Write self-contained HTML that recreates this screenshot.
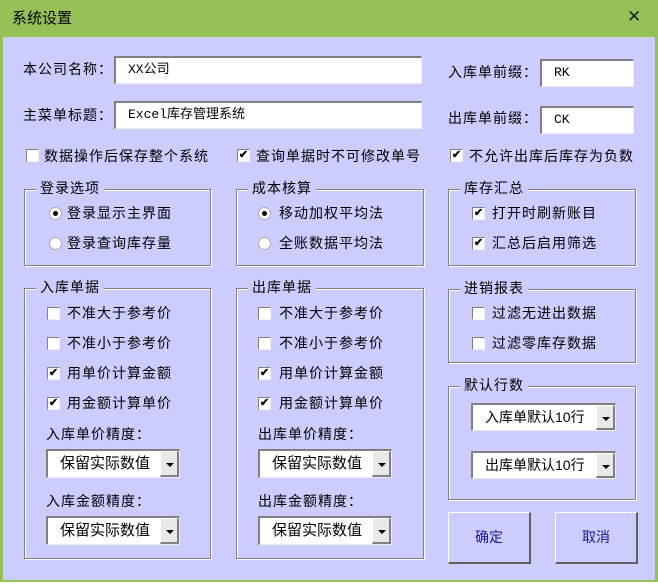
<!DOCTYPE html>
<html><head><meta charset="utf-8"><style>
*{margin:0;padding:0;box-sizing:border-box}
body{width:658px;height:585px;overflow:hidden;background:#fff;font-family:"Liberation Sans","Noto Sans CJK SC",sans-serif;font-size:14px;color:#000;position:relative}
#win{position:absolute;left:0;top:0;width:658px;height:582px;background:#95c256}
#body{position:absolute;left:3px;top:37px;width:652px;height:543px;background:#ccccff}
.a{position:absolute;white-space:nowrap;line-height:16px;letter-spacing:1px}
.tb{position:absolute;background:#fff;border-top:2px solid #808080;border-left:2px solid #808080;border-right:1px solid #eee;border-bottom:1px solid #eee;font-family:"Liberation Mono","Noto Sans CJK SC",monospace;font-size:13px;padding-left:12px;line-height:24px}
.cb{position:absolute;width:13px;height:13px;background:#fff;border-top:1px solid #808080;border-left:1px solid #808080;border-right:1px solid #f0f0f0;border-bottom:1px solid #f0f0f0;font-size:11px;line-height:11px;text-align:center;font-weight:bold}
.rb{position:absolute;width:13px;height:13px;border-radius:50%;background:#fff;border:1px solid #aaa}
.rb.on::after{content:"";position:absolute;left:3px;top:3px;width:5px;height:5px;border-radius:50%;background:#000}
.fr{position:absolute;border:1px solid #808080;box-shadow:1px 1px 0 #fff,inset 1px 1px 0 #fff}
.ft{position:absolute;background:#ccccff;padding:0 4px;line-height:16px;white-space:nowrap;letter-spacing:1px}
.cmb{position:absolute;background:#fff;border-top:2px solid #808080;border-left:2px solid #808080;border-right:1px solid #eee;border-bottom:1px solid #eee;line-height:25px;padding-left:12px;white-space:nowrap;font-size:15px}
.cmb .dd{position:absolute;right:0;top:0;width:19px;height:100%;background:#e8e8e8;border-right:2px solid #808080;border-bottom:2px solid #808080;border-top:1px solid #fff;border-left:1px solid #fff}
.cmb .dd::after{content:"";position:absolute;left:5px;top:11px;border-left:4px solid transparent;border-right:4px solid transparent;border-top:4px solid #000}
.btn{position:absolute;width:83px;height:52px;background:#ccccff;border-top:1px solid #fff;border-left:1px solid #fff;border-right:2px solid #606060;border-bottom:2px solid #606060;color:#1a1aa0;text-align:center;line-height:49px}
</style></head><body>
<div id="win"></div>
<div class="a" style="left:12px;top:11px;font-size:15px;letter-spacing:0">系统设置</div>
<div class="a" style="left:627px;top:9px;font-size:17px;font-weight:300;color:#222">✕</div>
<div id="body"></div>

<div class="a" style="left:23px;top:61px">本公司名称：</div>
<div class="tb" style="left:114px;top:56px;width:308px;height:28px">XX公司</div>
<div class="a" style="left:23px;top:107px">主菜单标题：</div>
<div class="tb" style="left:114px;top:101px;width:308px;height:28px">Excel库存管理系统</div>
<div class="a" style="left:448px;top:64px">入库单前缀：</div>
<div class="tb" style="left:540px;top:59px;width:94px;height:28px">RK</div>
<div class="a" style="left:448px;top:110px">出库单前缀：</div>
<div class="tb" style="left:540px;top:106px;width:94px;height:28px">CK</div>

<div class="cb" style="left:26px;top:149px"></div><div class="a" style="left:44px;top:148px">数据操作后保存整个系统</div>
<div class="cb" style="left:237px;top:149px">✔</div><div class="a" style="left:256px;top:148px">查询单据时不可修改单号</div>
<div class="cb" style="left:450px;top:149px">✔</div><div class="a" style="left:469px;top:148px">不允许出库后库存为负数</div>

<div class="fr" style="left:24px;top:189px;width:187px;height:77px"></div><div class="ft" style="left:36px;top:180px">登录选项</div>
<div class="rb on" style="left:49px;top:207px"></div><div class="a" style="left:67px;top:205px">登录显示主界面</div>
<div class="rb" style="left:49px;top:237px"></div><div class="a" style="left:67px;top:235px">登录查询库存量</div>

<div class="fr" style="left:236px;top:189px;width:188px;height:77px"></div><div class="ft" style="left:248px;top:180px">成本核算</div>
<div class="rb on" style="left:258px;top:207px"></div><div class="a" style="left:279px;top:205px">移动加权平均法</div>
<div class="rb" style="left:258px;top:237px"></div><div class="a" style="left:279px;top:235px">全账数据平均法</div>

<div class="fr" style="left:448px;top:189px;width:188px;height:77px"></div><div class="ft" style="left:460px;top:180px">库存汇总</div>
<div class="cb" style="left:472px;top:207px">✔</div><div class="a" style="left:492px;top:205px">打开时刷新账目</div>
<div class="cb" style="left:472px;top:237px">✔</div><div class="a" style="left:492px;top:235px">汇总后启用筛选</div>

<div class="fr" style="left:24px;top:288px;width:187px;height:271px"></div><div class="ft" style="left:36px;top:279px">入库单据</div>
<div class="cb" style="left:47px;top:307px"></div><div class="a" style="left:67px;top:305px">不准大于参考价</div>
<div class="cb" style="left:47px;top:337px"></div><div class="a" style="left:67px;top:335px">不准小于参考价</div>
<div class="cb" style="left:47px;top:367px">✔</div><div class="a" style="left:67px;top:365px">用单价计算金额</div>
<div class="cb" style="left:47px;top:397px">✔</div><div class="a" style="left:67px;top:395px">用金额计算单价</div>
<div class="a" style="left:46px;top:426px">入库单价精度：</div>
<div class="cmb" style="left:46px;top:449px;width:134px;height:29px">保留实际数值<div class="dd"></div></div>
<div class="a" style="left:46px;top:493px">入库金额精度：</div>
<div class="cmb" style="left:46px;top:516px;width:134px;height:29px">保留实际数值<div class="dd"></div></div>

<div class="fr" style="left:236px;top:288px;width:188px;height:271px"></div><div class="ft" style="left:248px;top:279px">出库单据</div>
<div class="cb" style="left:258px;top:307px"></div><div class="a" style="left:279px;top:305px">不准大于参考价</div>
<div class="cb" style="left:258px;top:337px"></div><div class="a" style="left:279px;top:335px">不准小于参考价</div>
<div class="cb" style="left:258px;top:367px">✔</div><div class="a" style="left:279px;top:365px">用单价计算金额</div>
<div class="cb" style="left:258px;top:397px">✔</div><div class="a" style="left:279px;top:395px">用金额计算单价</div>
<div class="a" style="left:258px;top:426px">出库单价精度：</div>
<div class="cmb" style="left:258px;top:449px;width:134px;height:29px">保留实际数值<div class="dd"></div></div>
<div class="a" style="left:258px;top:493px">出库金额精度：</div>
<div class="cmb" style="left:258px;top:516px;width:134px;height:29px">保留实际数值<div class="dd"></div></div>

<div class="fr" style="left:448px;top:289px;width:188px;height:74px"></div><div class="ft" style="left:460px;top:280px">进销报表</div>
<div class="cb" style="left:472px;top:307px"></div><div class="a" style="left:492px;top:305px">过滤无进出数据</div>
<div class="cb" style="left:472px;top:337px"></div><div class="a" style="left:492px;top:335px">过滤零库存数据</div>

<div class="fr" style="left:448px;top:386px;width:188px;height:114px"></div><div class="ft" style="left:460px;top:377px">默认行数</div>
<div class="cmb" style="left:471px;top:403px;width:145px;height:28px;font-size:14px">入库单默认10行<div class="dd"></div></div>
<div class="cmb" style="left:471px;top:451px;width:145px;height:28px;font-size:14px">出库单默认10行<div class="dd"></div></div>

<div class="btn" style="left:448px;top:512px">确定</div>
<div class="btn" style="left:555px;top:512px">取消</div>
</body></html>
